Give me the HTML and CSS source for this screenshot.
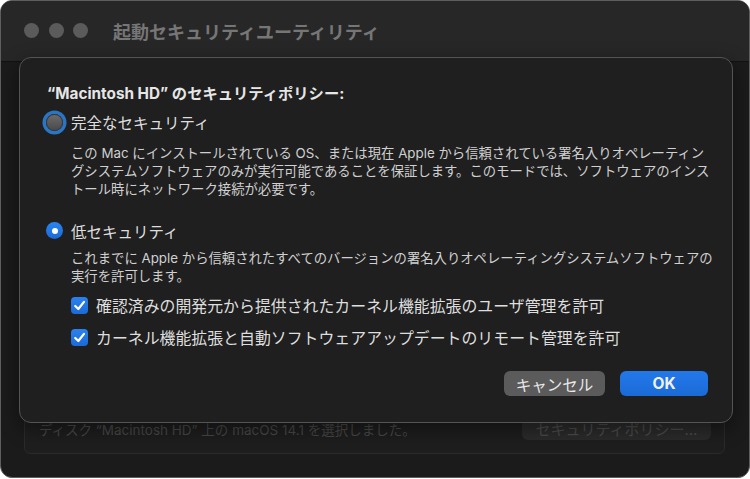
FILE: index.html
```html
<!DOCTYPE html>
<html lang="ja">
<head>
  <meta charset="UTF-8">
  <title>起動セキュリティユーティリティ</title>
  <link rel="stylesheet" href="styles.css">
</head>
<body>
  <div class="window">
    <div class="titlebar">
      <div class="lights">
        <span class="light"></span>
        <span class="light"></span>
        <span class="light"></span>
      </div>
      <div class="title">起動セキュリティユーティリティ</div>
    </div>

    <div class="content">
      <div class="groupbox">
        <div class="disk-text">ディスク “Macintosh HD” 上の macOS 14.1 を選択しました。</div>
        <button class="policy-btn">セキュリティポリシー…</button>
      </div>
    </div>

    <div class="sheet">
      <h2 class="heading">“Macintosh HD” のセキュリティポリシー:</h2>

      <div class="radio-row first">
        <span class="radio focus"></span>
        <span class="radio-label">完全なセキュリティ</span>
      </div>
      <p class="desc desc-full">この Mac にインストールされている OS、または現在 Apple から信頼されている署名入りオペレーティン<br>グシステムソフトウェアのみが実行可能であることを保証します。このモードでは、ソフトウェアのインス<br>トール時にネットワーク接続が必要です。</p>

      <div class="radio-row second">
        <span class="radio checked"></span>
        <span class="radio-label">低セキュリティ</span>
      </div>
      <p class="desc desc-low">これまでに Apple から信頼されたすべてのバージョンの署名入りオペレーティングシステムソフトウェアの<br>実行を許可します。</p>

      <div class="check-row">
        <span class="checkbox">
          <svg viewBox="0 0 16 16" width="17" height="17"><path d="M4 8.4 L6.9 11.3 L12.2 4.6" fill="none" stroke="#fff" stroke-width="2.1" stroke-linecap="round" stroke-linejoin="round"/></svg>
        </span>
        <span class="check-label">確認済みの開発元から提供されたカーネル機能拡張のユーザ管理を許可</span>
      </div>
      <div class="check-row">
        <span class="checkbox">
          <svg viewBox="0 0 16 16" width="17" height="17"><path d="M4 8.4 L6.9 11.3 L12.2 4.6" fill="none" stroke="#fff" stroke-width="2.1" stroke-linecap="round" stroke-linejoin="round"/></svg>
        </span>
        <span class="check-label">カーネル機能拡張と自動ソフトウェアアップデートのリモート管理を許可</span>
      </div>

      <div class="buttons">
        <button class="btn cancel">キャンセル</button>
        <button class="btn ok">OK</button>
      </div>
    </div>
  </div>
</body>
</html>
```

FILE: styles.css
```css
* {
  margin: 0;
  padding: 0;
  box-sizing: border-box;
  font-family: Inter, "Noto Sans CJK JP", sans-serif;
}
body {
  background-color: #fff;
  width: 750px;
  height: 479px;
}
.window {
  position: relative;
  width: 750px;
  height: 478px;
  background-color: #1b1b1b;
  border: 1px solid #5e5e5e;
  border-radius: 12px;
  overflow: hidden;
  display: flex;
  flex-direction: column;
}
.titlebar {
  height: 61px;
  background-color: #272727;
  border-bottom: 1px solid #121212;
  display: flex;
  align-items: center;
  padding-left: 23px;
  padding-bottom: 1px;
}
.lights {
  display: flex;
  gap: 9.5px;
}
.light {
  width: 15px;
  height: 15px;
  border-radius: 50%;
  background-color: #5b5b5b;
}
.title {
  margin-left: 25px;
  font-size: 18px;
  font-weight: bold;
  color: #767676;
}
.content {
  flex: 1;
  display: flex;
  flex-direction: column;
  justify-content: flex-end;
  padding: 0 24px 23px 23px;
}
.groupbox {
  height: 90px;
  border: 1px solid #2a2a2a;
  border-radius: 6px;
  background-color: #1e1e1e;
  display: flex;
  align-items: flex-end;
  justify-content: space-between;
  padding: 0 13px 13px 14px;
}
.disk-text {
  font-size: 13.5px;
  color: #484848;
  line-height: 20px;
}
.policy-btn {
  width: 189px;
  height: 21px;
  border: none;
  border-radius: 6px;
  background-color: #2b2b2b;
  color: #4b4b4b;
  font-size: 15px;
  line-height: 21px;
}
.sheet {
  position: absolute;
  left: 18px;
  top: 56px;
  width: 714px;
  height: 366px;
  background-color: #1f1f1f;
  border: 1px solid #545454;
  border-radius: 12px;
  box-shadow: 0 6px 20px rgba(0, 0, 0, 0.45);
  padding: 27px 24px 0 27px;
  display: flex;
  flex-direction: column;
}
.heading {
  font-size: 15.3px;
  font-weight: bold;
  line-height: 18px;
  color: #e6e6e6;
}
.radio-row {
  height: 24px;
  display: flex;
  align-items: center;
  margin-left: -1px;
}
.radio-row.first {
  margin-top: 7px;
}
.radio-row.second {
  margin-top: 20.5px;
}
.radio {
  width: 17px;
  height: 17px;
  border-radius: 50%;
  margin-right: 8px;
  position: relative;
  flex-shrink: 0;
}
.radio.focus {
  background: linear-gradient(#6b6b6b, #4a4a4a);
  border: 1px solid #3d3d3d;
  box-shadow: 0 0 0 3.5px #2a76c4;
}
.radio.checked {
  background: linear-gradient(#2a84f0, #1a6ad9);
}
.radio.checked::after {
  content: "";
  position: absolute;
  left: 5.5px;
  top: 5.5px;
  width: 6px;
  height: 6px;
  border-radius: 50%;
  background-color: #fff;
}
.radio-label {
  font-size: 15.5px;
  color: #dedede;
}
.desc {
  margin-left: 24px;
  font-size: 13.35px;
  line-height: 18.3px;
  color: #d0d0d0;
  white-space: nowrap;
}
.desc-full {
  margin-top: 9.5px;
}
.desc-low {
  margin-top: 6px;
}
.check-row {
  height: 22px;
  margin-left: 24px;
  margin-top: 9.5px;
  display: flex;
  align-items: center;
}
.checkbox {
  width: 17px;
  height: 17px;
  border-radius: 4px;
  background: linear-gradient(#2a82ee, #1b6bd8);
  display: flex;
  margin-right: 8px;
  flex-shrink: 0;
}
.check-label {
  font-size: 15.9px;
  color: #dedede;
  white-space: nowrap;
}
.buttons {
  margin-top: 23px;
  display: flex;
  justify-content: flex-end;
  gap: 15px;
}
.btn {
  height: 25px;
  border: none;
  border-radius: 6px;
  font-size: 15.5px;
  font-weight: normal;
  color: #e8e8e8;
}
.btn.cancel {
  width: 101px;
  background-color: #5b5b5b;
}
.btn.ok {
  width: 88px;
  background: linear-gradient(#2378ea, #1a6bd6);
  font-weight: bold;
  color: #f2f2f2;
}
```
